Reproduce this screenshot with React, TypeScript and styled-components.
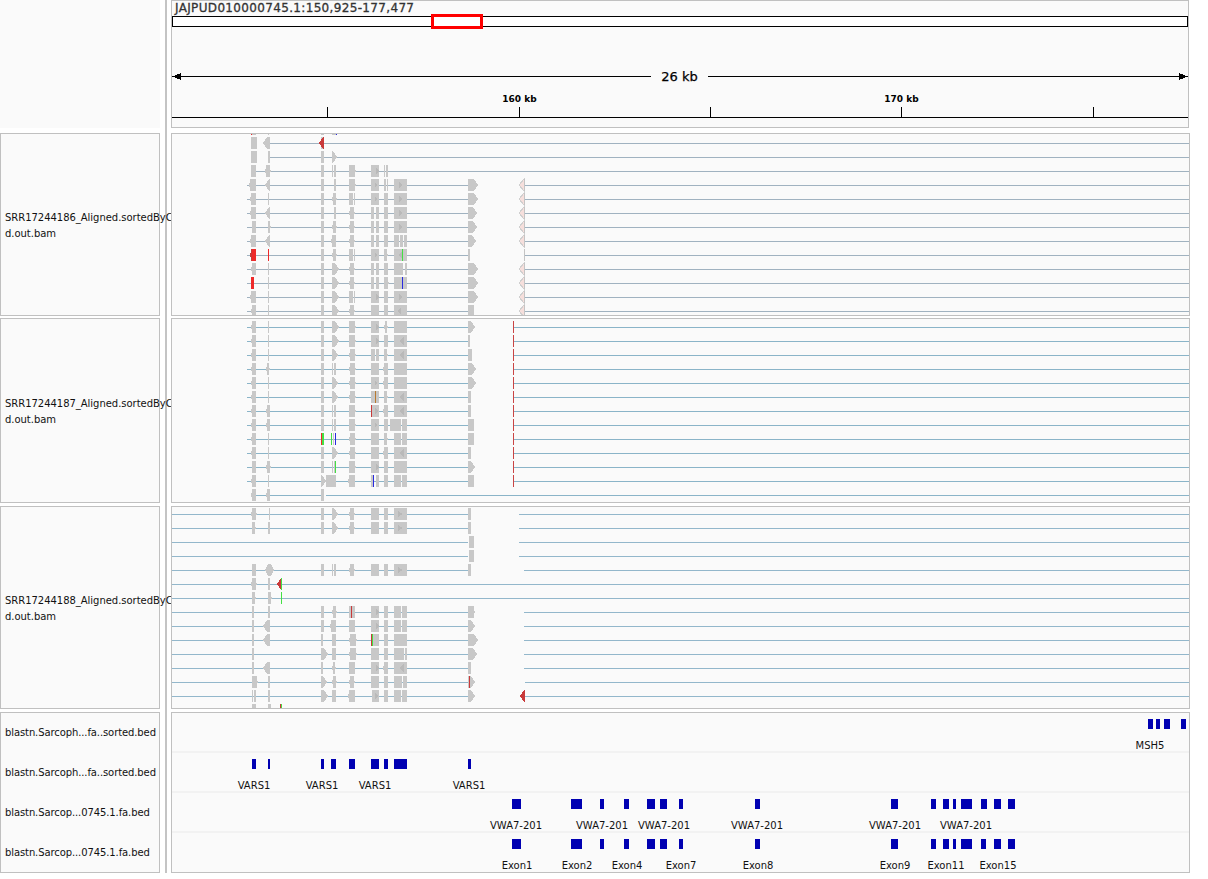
import React from "react";
import styled, { createGlobalStyle } from "styled-components";

const Global = createGlobalStyle`
  html, body { margin: 0; padding: 0; background: #ffffff; }
  body { font-family: "DejaVu Sans", "Liberation Sans", sans-serif; color: #000; }
`;

const Page = styled.div`
  display: flex;
  width: 1208px;
  height: 879px;
  overflow: hidden;
`;
const LeftColumn = styled.div`
  display: flex;
  flex-direction: column;
  width: 160px;
  position: relative;
  z-index: 1;
`;
const Divider = styled.div`
  width: 2px;
  height: 873px;
  margin: 0 4px 0 5px;
  background: #c4c4c4;
`;
const RightColumn = styled.div`
  display: flex;
  flex-direction: column;
  width: 1019px;
  position: relative;
  z-index: 2;
`;
const NamePanel = styled.div<{ $h: number; $gap: number; $plain?: boolean }>`
  box-sizing: border-box;
  height: ${(p) => p.$h}px;
  margin-bottom: ${(p) => p.$gap}px;
  background: #fafafa;
  border: ${(p) => (p.$plain ? "none" : "1px solid #c0c0c0")};
  display: flex;
  flex-direction: column;
  justify-content: center;
`;
const TrackName = styled.div`
  font-size: 10px;
  line-height: 16px;
  padding: 2px 0 0 4px;
  letter-spacing: -0.03px;
  white-space: pre;
  color: #111;
`;
const BedName = styled.div`
  height: 40px;
  display: flex;
  align-items: center;
  padding-left: 4px;
  font-size: 10px;
  letter-spacing: -0.1px;
  white-space: pre;
  color: #111;
`;
const DataPanel = styled.div<{ $h: number; $gap: number; $w?: number }>`
  box-sizing: border-box;
  width: ${(p) => p.$w ?? 1019}px;
  height: ${(p) => p.$h}px;
  margin-bottom: ${(p) => p.$gap}px;
  background: #fafafa;
  border: 1px solid #c0c0c0;
  overflow: hidden;
`;
const Locus = styled.div`
  height: 15px;
  padding-left: 3px;
  font-size: 12px;
  line-height: 14px;
  letter-spacing: 0.34px;
  -webkit-text-stroke: 0.3px #333;
  color: #333;
  white-space: pre;
`;
const Ideogram = styled.div`
  box-sizing: border-box;
  position: relative;
  height: 11px;
  background: #fff;
  border: 1px solid #000;
`;
const ViewBox = styled.div`
  box-sizing: border-box;
  position: absolute;
  left: 258px;
  top: -3px;
  width: 52px;
  height: 15px;
  border: 3px solid #ff0000;
`;
const Canvas = styled.svg`
  display: block;
`;
const SpanText = styled.text`
  font-family: "DejaVu Sans", sans-serif;
  font-size: 13px;
  stroke: #000;
  stroke-width: 0.25px;
  fill: #000;
`;
const TickText = styled.text`
  font-family: "DejaVu Sans", sans-serif;
  font-size: 9px;
  font-weight: 700;
  fill: #000;
`;
const BedRow = styled.div<{ $last?: boolean }>`
  box-sizing: border-box;
  height: 40px;
  border-bottom: ${(p) => (p.$last ? "none" : "2px solid #f2f2f2")};
`;
const FeatureText = styled.text`
  font-family: "DejaVu Sans", sans-serif;
  font-size: 10px;
  fill: #111;
`;

const GREY = "#c8c8c8";
const MARK = "#b9b9b9";
const END = 3087;
const px = (z: number) => Math.round(160 + z / 3);

type Token = { k: string; a: number; b: number; c?: string };
const parse = (s: string): Token[] =>
  s
    .trim()
    .split(/\s+/)
    .filter(Boolean)
    .map((t) => {
      const m = t.match(/^([a-zA-Z])(\d+)-(\d+)(#\w+)?$/)!;
      return { k: m[1], a: px(+m[2]), b: Math.max(px(+m[3]), px(+m[2]) + 1), c: m[4] };
    });

function Shape({ t, y }: { t: Token; y: number }) {
  const top = y - 6;
  const bot = y + 6;
  const f = t.c ?? GREY;
  const { a, b, k } = t;
  if (k === "b") return <rect x={a} y={top} width={b - a} height={12} fill={f} />;
  if (k === "r") {
    const m = Math.max(a, b - 4);
    return <polygon points={`${a},${top} ${m},${top} ${b},${y} ${m},${bot} ${a},${bot}`} fill={f} />;
  }
  if (k === "l") {
    const m = Math.min(b, a + 4);
    return <polygon points={`${a},${y} ${m},${top} ${b},${top} ${b},${bot} ${m},${bot}`} fill={f} />;
  }
  if (k === "D")
    return (
      <polygon
        points={`${a},${y} ${a + 3},${top} ${b - 3},${top} ${b},${y} ${b - 3},${bot} ${a + 3},${bot}`}
        fill={f}
      />
    );
  if (k === "m") return <polygon points={`${a},${y - 3} ${b},${y} ${a},${y + 3}`} fill={MARK} />;
  if (k === "w") return <polygon points={`${b},${y - 4} ${a},${y} ${b},${y + 4}`} fill={MARK} />;
  if (k === "R" || k === "L" || k === "d") {
    const tip = b - a > 10 ? 2 : 1;
    const l = k === "R" ? a : a + tip;
    const r = k === "L" ? b : b - tip;
    const pts = [
      [l, top],
      [r, top],
      ...(k !== "L" ? [[r, y - 3], [b, y], [r, y + 3]] : []),
      [r, bot],
      [l, bot],
      ...(k !== "R" ? [[l, y + 3], [a, y], [l, y - 3]] : []),
    ];
    return <polygon points={pts.map((p) => p.join(",")).join(" ")} fill={f} />;
  }
  if (k === "j")
    return (
      <g>
        <polygon points={`${a},${y} ${b - 1},${top} ${b - 1},${bot}`} fill="#f6dfdc" stroke="#cfcfcf" strokeWidth={1} />
        <rect x={b - 1} y={top} width={1} height={12} fill="#c4c4c4" />
      </g>
    );
  return null;
}

function Plot({ top, h, start, rows, line }: { top: number; h: number; start: number; rows: string[]; line: string }) {
  return (
    <Canvas width={1017} height={h - 2} viewBox={`172 ${top + 1} 1017 ${h - 2}`} shapeRendering="crispEdges">
      {rows.map((r, i) => {
        const y = start + i * 14;
        const toks = parse(r);
        return (
          <g key={i}>
            {toks
              .filter((t) => t.k === "n")
              .map((t, j) => (
                <rect key={j} x={t.a} y={y} width={t.b - t.a} height={1} fill={line} />
              ))}
            {toks
              .filter((t) => t.k !== "n")
              .map((t, j) => (
                <Shape key={j} t={t} y={y} />
              ))}
          </g>
        );
      })}
    </Canvas>
  );
}

const RED = "#ee2a2a";
const DRED = "#c93a3a";
const GRN = "#44e044";
const BLU = "#2a2ae0";
const C = "b484-492";
const J = "j1078-1095";
const HL = `n262-925 n1095-${END}`;
const Fm = "b633-657 m644-652";
const Fr = "b633-657 m648-656";
const Hm = "b702-741 m718-726";

const track1 = [
  `b272-288 b324-327 b484-492 b517-528 b274-276${RED} b527-530${BLU}`,
  `n330-${END} b272-290 l310-330 ${C} l478-492${DRED}`,
  `n330-${END} b272-290 b325-330 ${C} r516-532`,
  `n287-${END} b272-288 d316-332 ${C} b517-520 b523-528 R567-588 ${Fr} b672-675 b678-684`,
  `${HL} L268-288 l316-329 ${C} b522-528 R567-588 ${Fm} b672-678 b681-684 ${Hm} r925-954 ${J}`,
  `${HL} L271-288 b325-327 ${C} d516-530 b567-578 b581-584 ${Fm} b672-684 ${Hm} r925-954 ${J}`,
  `${HL} L271-288 l316-329 ${C} b522-528 d567-585 b633-642 b647-657 b672-684 ${Hm} r925-950 ${J}`,
  `${HL} b276-288 R325-333 ${C} d516-530 d567-585 b633-643 b648-657 b672-684 ${Hm} r925-950 ${J}`,
  `${HL} L271-288 l316-329 ${C} L514-528 d567-585 b633-643 b648-657 b672-684 b702-716 b719-728 b731-741 r925-947 ${J}`,
  `n262-925 n1095-${END} L271-277${DRED} b277-288${RED} b324-327${RED} ${C} d516-530 b567-578 b581-584 ${Fm} R673-684 b702-741 w714-726 b727-729${GRN} b925-930 b1093-1095#c4c4c4`,
  `${HL} L273-288 b325-327 ${C} r516-537 d567-585 b633-642 b648-657 b672-684 b702-730 b735-741 r925-954 ${J}`,
  `${HL} b272-281${RED} b325-327 ${C} r516-537 d567-585 b633-642 b648-657 R672-686 b702-741 b726-729${BLU} r925-954 ${J}`,
  `${HL} L271-288 b325-327 ${C} r516-537 b567-578 b581-584 ${Fr} b672-684 ${Hm} r925-954 ${J}`,
  `${HL} L272-288 b325-327 ${C} r516-537 d567-585 b633-657 b672-684 b702-741 w710-722 b925-942 ${J}`,
];

const A2 = "L272-288";
const T = "b1059-1062#c94444";
const L2 = `n262-925 n1062-${END}`;
const track2 = [
  `${L2} ${A2} b325-327 ${C} r516-537 R567-587 ${Fr} d672-684 b702-741 r925-945 ${T}`,
  `${L2} ${A2} b325-327 ${C} r516-537 R567-587 ${Fr} b672-684 b702-741 w716-732 b925-930 ${T}`,
  `${L2} ${A2} b325-327 ${C} r516-534 d567-587 b633-644 b648-657 R672-684 b702-741 w716-732 b925-936 ${T}`,
  `${L2} ${A2} d317-330 ${C} b517-520 b522-528 d567-588 b633-657 L670-684 b702-741 r925-948 ${T}`,
  `${L2} ${A2} b325-327 ${C} r516-534 d567-587 ${Fm} L670-684 b702-741 r925-948 ${T}`,
  `${L2} ${A2} b325-327 ${C} r516-534 d567-587 b633-657 b645-648#b87a30 R672-684 b702-741 w716-732 b925-933 ${T}`,
  `${L2} ${A2} L317-330 ${C} b517-520 b522-528 R567-587 b636-657 m644-654 b633-636${DRED} L670-684 b702-741 w716-732 b925-933 ${T}`,
  `${L2} ${A2} L317-330 ${C} b517-520 b522-528 R567-587 ${Fm} b672-684 b690-723 b726-741 b925-942 ${T}`,
  `${L2} ${A2} b325-327 b484-487${RED} b487-491${GRN} b514-517${GRN} b518-522 b525-528${BLU} d567-587 b633-657 R672-684 b702-723 b726-741 b925-942 ${T}`,
  `${L2} ${A2} b325-327 ${C} r516-534 d567-587 b633-657 L670-684 b702-741 w716-732 b925-933 ${T}`,
  `${L2} b276-288 d318-333 ${C} b517-520 b522-524 b524-528${GRN} R567-587 ${Fr} b672-684 b702-741 r925-945 ${T}`,
  `${L2} ${A2} b325-327 r484-497 b497-528 L565-585 b634-642 b638-642${BLU} b648-657 b672-684 b702-723 b726-741 b925-942 ${T}`,
  `n288-492 n498-${END} ${A2} L317-330 ${C}`,
];

const L3 = `n35-925 n1092-${END}`;
const L3b = `n35-925 n1077-${END}`;
const track3 = [
  `${L3b} d274-290 b327-330 ${C} r517-534 d567-585 b633-657 b672-684 b702-741 m714-730 b925-933`,
  `${L3b} R276-288 b325-330 ${C} r517-534 d567-585 b633-657 b672-684 b702-741 m714-730 b925-933`,
  `${L3b} b927-942`,
  `${L3b} b927-942`,
  `${L3} b276-288 D315-342 ${C} b517-520 b522-528 d567-585 b633-657 b672-684 b702-741 m714-730 b925-933`,
  `n35-${END} d273-290 b324-330 l352-365${DRED} b364-366${GRN}`,
  `n35-${END} R276-288 R324-336 b364-366${GRN}`,
  `${L3} b276-282 b324-330 ${C} d516-530 b567-585 b573-576${DRED} ${Fr} b672-684 b702-723 b726-741 R925-945`,
  `${L3} b276-282 l310-330 b484-492 L510-528 b567-585 ${Fr} b672-684 b702-723 b726-741 r925-945`,
  `${L3} b276-282 l310-330 b484-490 b516-528 d567-592 b639-657 b633-635${DRED} b635-639${GRN} b672-684 b702-741 r925-954`,
  `${L3} b276-282 r484-504 b516-528 d567-592 b633-657 b672-684 b702-732 b735-741 r925-951`,
  `${L3} b276-282 l310-330 b484-490 d516-528 b567-585 ${Fr} L670-684 b702-741 w716-732 b925-933`,
  `n35-925 n1095-${END} R276-294 b324-330 r484-501 d516-532 d567-585 b633-657 b672-684 b702-726 b730-741 r930-945 b925-930 b927-930${DRED}`,
  `n35-925 n1095-${END} b276-279 b282-288 b324-330 r484-504 b516-528 L565-585 b636-657 m646-654 b672-684 b702-723 b726-741 r925-945 l1081-1095${DRED}`,
  `b276-288 b324-333 b360-364${DRED} b364-366${GRN}`,
];

type Bed = { blocks: [number, number][]; labels: [string, number][] };
const vwa: [number, number][] = [
  [512, 521], [571, 582], [600, 604], [624, 629], [647, 655], [660, 667], [679, 683], [755, 760],
  [891, 898], [931, 936], [943, 949], [953, 956], [961, 972], [981, 987], [994, 1001], [1008, 1015],
];
const beds: Bed[] = [
  { blocks: [[1148, 1153], [1156, 1160], [1164, 1170], [1181, 1186]], labels: [["MSH5", 1150]] },
  {
    blocks: [[252, 256], [268, 270], [321, 324], [331, 336], [349, 355], [371, 379], [384, 388], [394, 407], [468, 471]],
    labels: [["VARS1", 254], ["VARS1", 322], ["VARS1", 375], ["VARS1", 469]],
  },
  {
    blocks: vwa,
    labels: [["VWA7-201", 516], ["VWA7-201", 602], ["VWA7-201", 664], ["VWA7-201", 757], ["VWA7-201", 895], ["VWA7-201", 966]],
  },
  {
    blocks: vwa.map((b) => (b[0] === 981 ? ([981, 986] as [number, number]) : b)),
    labels: [["Exon1", 517], ["Exon2", 577], ["Exon4", 627], ["Exon7", 681], ["Exon8", 758], ["Exon9", 895], ["Exon11", 946], ["Exon15", 998]],
  },
];
const bedNames = [
  "blastn.Sarcoph...fa..sorted.bed",
  "blastn.Sarcoph...fa..sorted.bed",
  "blastn.Sarcop...0745.1.fa.bed",
  "blastn.Sarcop...0745.1.fa.bed",
];

const tracks = [
  { name: "SRR17244186", h: 183, gap: 2, top: 133, start: 129, rows: track1, line: "#a0b2c0" },
  { name: "SRR17244187", h: 185, gap: 3, top: 318, start: 327, rows: track2, line: "#8ab4c8" },
  { name: "SRR17244188", h: 203, gap: 3, top: 506, start: 514, rows: track3, line: "#93b7cb" },
];

export default function App() {
  return (
    <Page>
      <Global />
      <LeftColumn>
        <NamePanel $h={128} $gap={5} $plain />
        {tracks.map((t) => (
          <NamePanel key={t.name} $h={t.h} $gap={t.gap}>
            <TrackName>{`${t.name}_Aligned.sortedByCoor\nd.out.bam`}</TrackName>
          </NamePanel>
        ))}
        <NamePanel $h={161} $gap={0}>
          {bedNames.map((n, i) => (
            <BedName key={i}>{n}</BedName>
          ))}
        </NamePanel>
      </LeftColumn>
      <Divider />
      <RightColumn>
        <DataPanel $h={128} $gap={5} $w={1018}>
          <Locus>JAJPUD010000745.1:150,925-177,477</Locus>
          <Ideogram>
            <ViewBox />
          </Ideogram>
          <Canvas width={1016} height={100} viewBox="172 27 1016 100">
            <g shapeRendering="crispEdges">
              <rect x={172} y={76} width={479} height={1} fill="#000" />
              <rect x={708} y={76} width={480} height={1} fill="#000" />
              <rect x={172} y={117} width={1016} height={1} fill="#000" />
              {[327, 519, 710, 901, 1093].map((x) => (
                <rect key={x} x={x} y={107} width={1} height={10} fill="#000" />
              ))}
              <polygon points="172,76.5 181,73 181,80" fill="#000" />
              <polygon points="1188,76.5 1179,73 1179,80" fill="#000" />
            </g>
            <SpanText x={679.5} y={81} textAnchor="middle">26 kb</SpanText>
            <TickText x={519.5} y={102} textAnchor="middle">160 kb</TickText>
            <TickText x={901.5} y={102} textAnchor="middle">170 kb</TickText>
          </Canvas>
        </DataPanel>
        {tracks.map((t) => (
          <DataPanel key={t.name} $h={t.h} $gap={t.gap}>
            <Plot top={t.top} h={t.h} start={t.start} rows={t.rows} line={t.line} />
          </DataPanel>
        ))}
        <DataPanel $h={161} $gap={0}>
          {beds.map((b, i) => (
            <BedRow key={i} $last={i === 3}>
              <Canvas width={1017} height={38} viewBox="172 0 1017 38">
                {b.blocks.map(([a, c]) => (
                  <rect key={a} x={a} y={6} width={c - a} height={10} fill="#0000b2" shapeRendering="crispEdges" />
                ))}
                {b.labels.map(([s, x], j) => (
                  <FeatureText key={j} x={x} y={36} textAnchor="middle">{s}</FeatureText>
                ))}
              </Canvas>
            </BedRow>
          ))}
        </DataPanel>
      </RightColumn>
    </Page>
  );
}
